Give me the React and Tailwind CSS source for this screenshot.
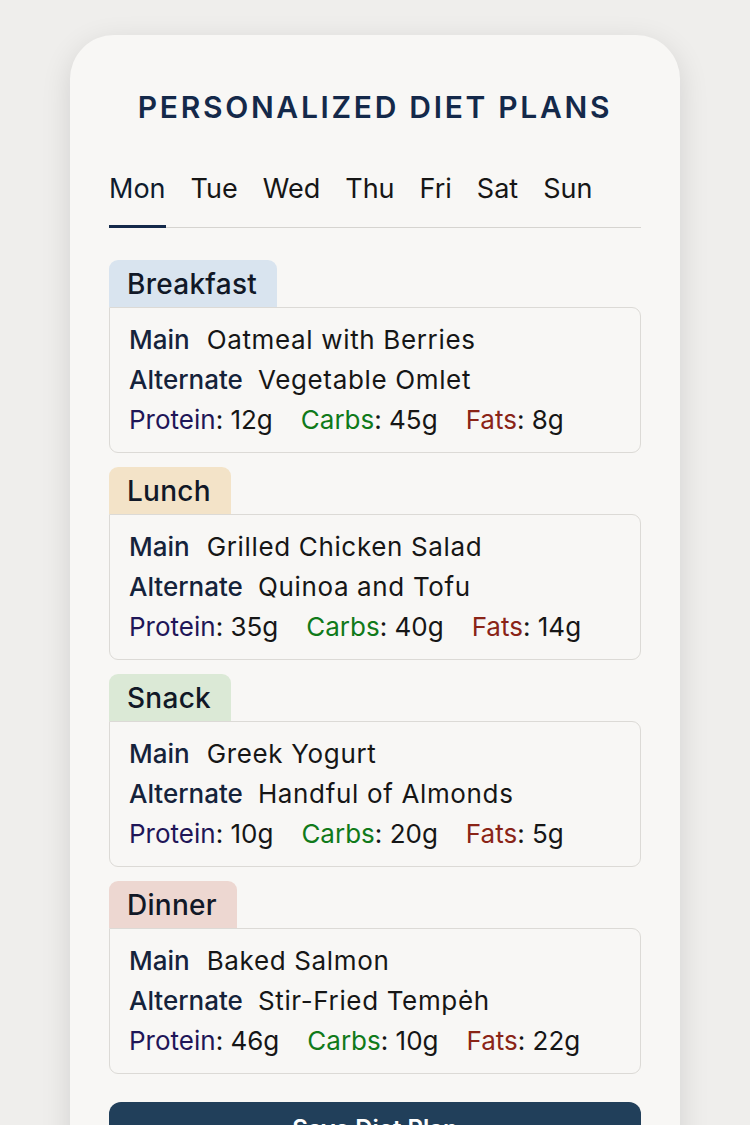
import { useState } from "react";

const days = ["Mon", "Tue", "Wed", "Thu", "Fri", "Sat", "Sun"];

const meals = [
  { name: "Breakfast", tab: "bg-[#d9e4ef]", main: "Oatmeal with Berries", alt: "Vegetable Omlet", p: "12g", c: "45g", f: "8g" },
  { name: "Lunch", tab: "bg-[#f3e3c8]", main: "Grilled Chicken Salad", alt: "Quinoa and Tofu", p: "35g", c: "40g", f: "14g" },
  { name: "Snack", tab: "bg-[#dbe9d6]", main: "Greek Yogurt", alt: "Handful of Almonds", p: "10g", c: "20g", f: "5g" },
  { name: "Dinner", tab: "bg-[#edd7d1]", main: "Baked Salmon", alt: "Stir-Fried Tempėh", p: "46g", c: "10g", f: "22g" },
];

const MealCard = ({ meal }) => (
  <div className="flex flex-col">
    <div className={`self-start ${meal.tab} rounded-t-[9px] pl-[18px] pr-[20px] h-[47px] flex items-center text-[28px] font-medium tracking-[0.01em] text-[#111827]`}>
      {meal.name}
    </div>
    <div className="border border-[#dcdad6] rounded-[9px] rounded-tl-none px-[19px] py-[12px] text-[26px] leading-[40px] text-[#161616]">
      <div className="flex">
        <span className="font-medium text-[#15233b] mr-[17px]">Main</span>
        <span className="tracking-[0.025em]">{meal.main}</span>
      </div>
      <div className="flex">
        <span className="font-medium text-[#15233b] mr-[15px]">Alternate</span>
        <span className="tracking-[0.025em]">{meal.alt}</span>
      </div>
      <div className="flex gap-[28px]">
        <span><span className="text-[#1f1658]">Protein</span>: {meal.p}</span>
        <span><span className="text-[#107a1a]">Carbs</span>: {meal.c}</span>
        <span><span className="text-[#8a2417]">Fats</span>: {meal.f}</span>
      </div>
    </div>
  </div>
);

export default function App() {
  const [active, setActive] = useState("Mon");

  return (
    <div className="min-h-[1125px] bg-[#efeeec] px-[70px] pt-[35px] overflow-hidden" style={{ fontFamily: "Inter, 'Noto Sans', sans-serif" }}>
      <div className="bg-[#f8f7f5] rounded-[44px] shadow-[0_8px_30px_rgba(0,0,0,0.12)] px-[39px] pt-[54px] pb-[40px]">
        <h1 className="text-center text-[30px] font-semibold tracking-[0.09em] text-[#14294a] leading-[36px]">
          PERSONALIZED DIET PLANS
        </h1>

        <div className="mt-[48px] flex gap-[25px] border-b border-[#d6d4d0]">
          {days.map((d) => (
            <button
              key={d}
              onClick={() => setActive(d)}
              className={`text-[27px] leading-[32px] pb-[20px] -mb-[1px] border-b-[3px] ${active === d ? "border-[#14294a] text-[#0f1b2d]" : "border-transparent text-[#161616]"}`}
            >
              {d}
            </button>
          ))}
        </div>

        <div className="mt-[32px] flex flex-col gap-[14px]">
          {meals.map((m) => (
            <MealCard key={m.name} meal={m} />
          ))}
        </div>

        <button className="mt-[28px] w-full h-[54px] rounded-[12px] bg-[#213f5a] text-white text-[24px] font-semibold">
          Save Diet Plan
        </button>
      </div>
    </div>
  );
}
